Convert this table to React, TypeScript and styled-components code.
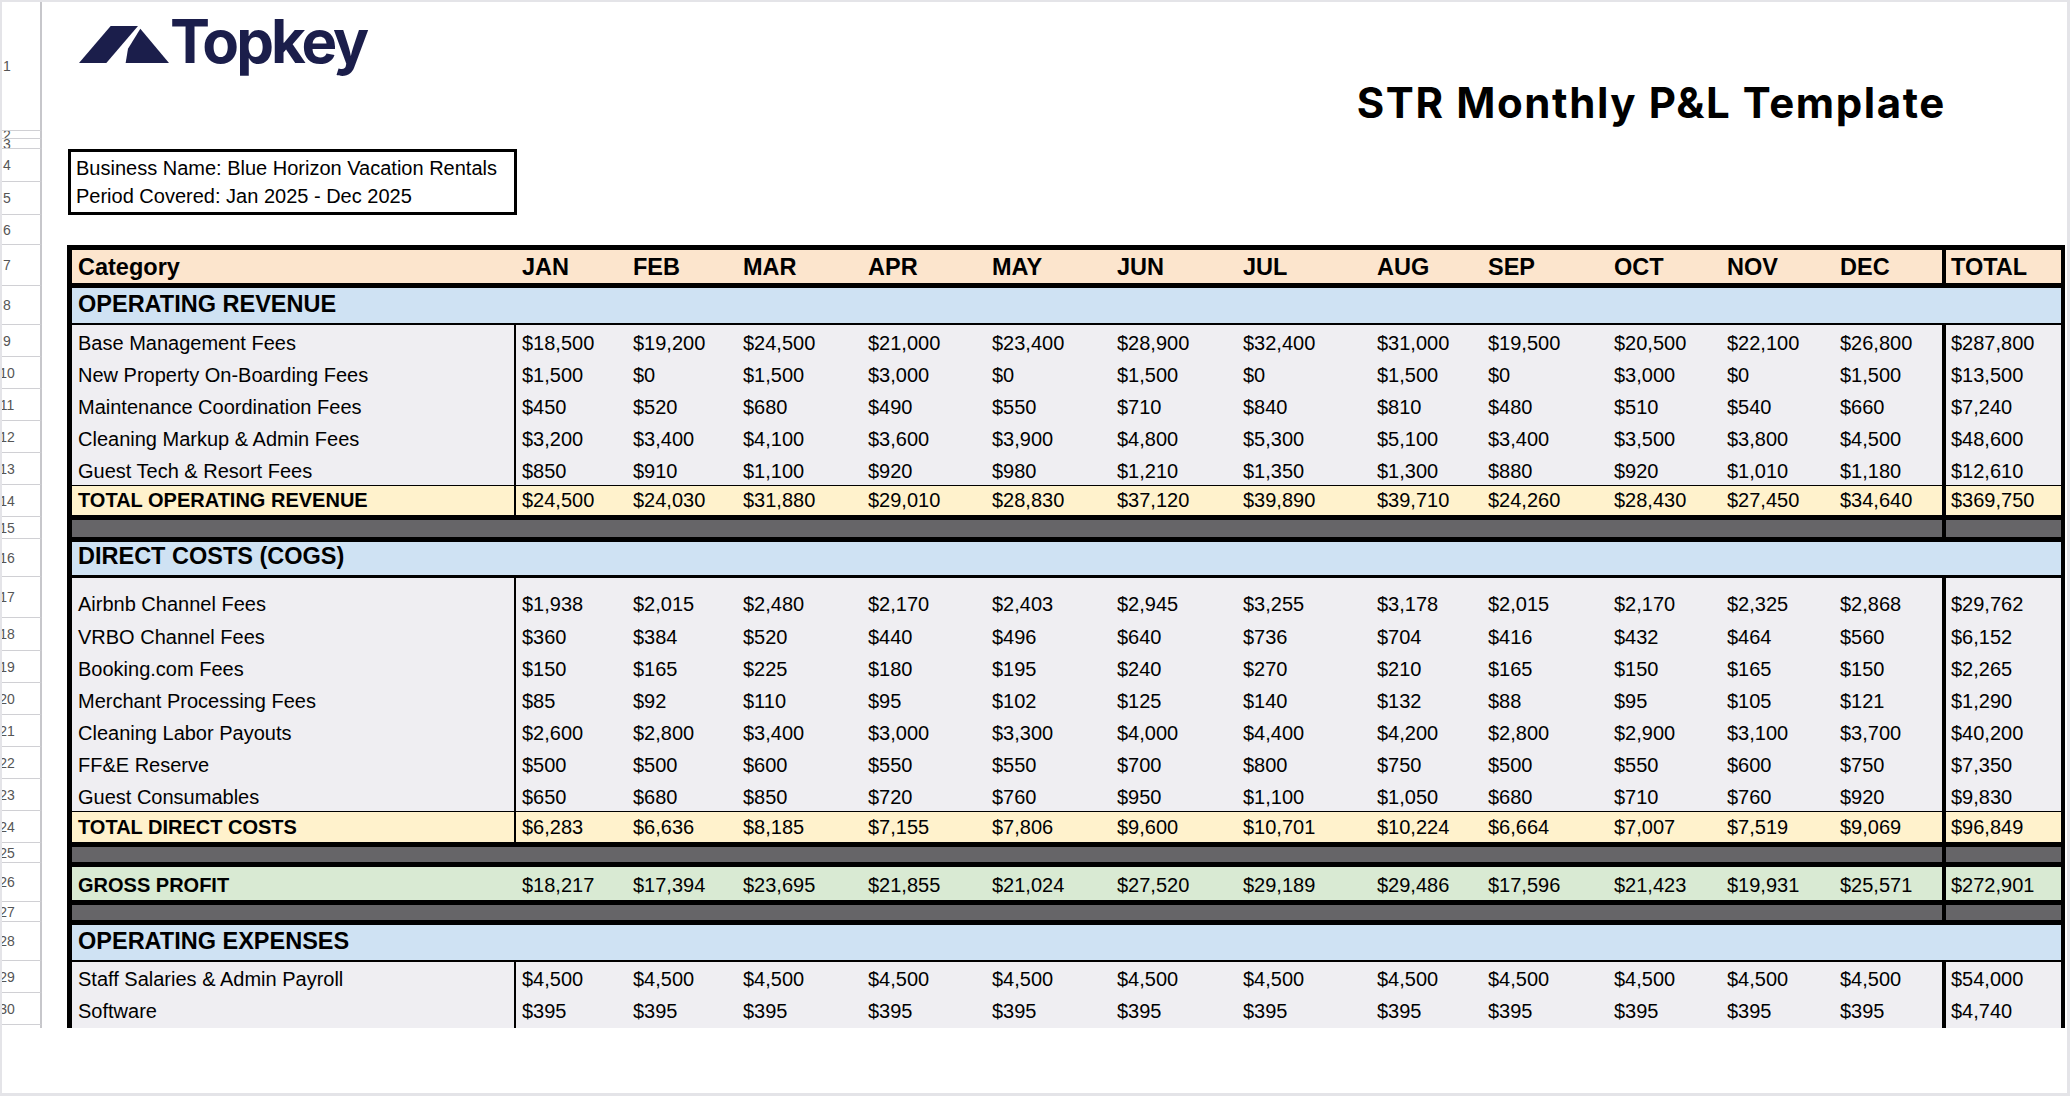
import styled, { createGlobalStyle } from 'styled-components';

type Tone = 'header' | 'section' | 'data' | 'total' | 'spacer' | 'gross';

interface ToneSpec {
  bg: string;
  size: number;
  labelBold: boolean;
  valueBold: boolean;
  pb: number;
  catDiv: boolean;
  totDiv: boolean;
}

const tones: Record<Tone, ToneSpec> = {
  header: { bg: '#fce5cd', size: 23.5, labelBold: true, valueBold: true, pb: 4, catDiv: false, totDiv: true },
  section: { bg: '#cfe2f3', size: 23.5, labelBold: true, valueBold: false, pb: 7, catDiv: false, totDiv: false },
  data: { bg: '#efeef2', size: 20, labelBold: false, valueBold: false, pb: 4, catDiv: true, totDiv: true },
  total: { bg: '#fff2cc', size: 20, labelBold: true, valueBold: false, pb: 5, catDiv: true, totDiv: true },
  spacer: { bg: '#666568', size: 20, labelBold: false, valueBold: false, pb: 0, catDiv: false, totDiv: true },
  gross: { bg: '#d9ead3', size: 20, labelBold: true, valueBold: false, pb: 5, catDiv: false, totDiv: true },
};

const MONTHS = ['JAN', 'FEB', 'MAR', 'APR', 'MAY', 'JUN', 'JUL', 'AUG', 'SEP', 'OCT', 'NOV', 'DEC'];

const GlobalStyle = createGlobalStyle`
  html, body { margin: 0; padding: 0; background: #fff; }
  body { font-family: "Liberation Sans", Arial, sans-serif; color: #000; }
`;

const Frame = styled.div`
  width: 2070px;
  height: 1096px;
  box-sizing: border-box;
  border-style: solid;
  border-color: #e4e4e8;
  border-width: 2px 3px 3px 2px;
  background: #fff;
  overflow: hidden;
`;

const Sheet = styled.div`
  height: 1026px;
  overflow: hidden;
  display: flex;
  flex-direction: column;
`;

const SheetRow = styled.div<{ $h: number }>`
  display: flex;
  flex: none;
  height: ${({ $h }) => $h}px;
`;

const RowNum = styled.div`
  flex: none;
  width: 40px;
  box-sizing: border-box;
  border-right: 2px solid #c7c7cb;
  border-bottom: 1px solid #d0d0d4;
  display: flex;
  align-items: center;
  justify-content: center;
  padding-right: 28px;
  overflow: hidden;
  font-size: 14px;
  color: #555;
`;

const Cells = styled.div`
  flex: 1;
  min-width: 0;
  display: flex;
  padding: 0 2px 0 25px;
`;

const TopCells = styled(Cells)`
  justify-content: space-between;
  align-items: flex-start;
  padding: 0 121px 0 37px;
`;

const Logo = styled.div`
  display: flex;
  align-items: baseline;
  margin-top: 9px;
`;

const LogoMark = styled.svg`
  flex: none;
  width: 90px;
  height: 37px;
  margin-right: 1px;
`;

const LogoText = styled.span`
  font-family: Inter, "Open Sans", sans-serif;
  font-weight: 700;
  font-size: 60px;
  line-height: 1;
  letter-spacing: -3px;
  color: #1b1e4b;
`;

const Title = styled.h1`
  margin: 80px 0 0;
  font-family: Inter, "Open Sans", sans-serif;
  font-weight: 700;
  font-size: 42px;
  line-height: 1;
  letter-spacing: 1.6px;
  color: #000;
  white-space: nowrap;
`;

const InfoCell = styled.div<{ $edge: 'top' | 'bottom' }>`
  width: 449px;
  margin-left: 1px;
  box-sizing: border-box;
  border: 3px solid #000;
  ${({ $edge }) => ($edge === 'top' ? 'border-bottom: 0;' : 'border-top: 0;')}
  display: flex;
  align-items: flex-end;
  padding: 0 0 ${({ $edge }) => ($edge === 'top' ? 4 : 6)}px 5px;
  font-size: 20px;
  line-height: 1;
  white-space: nowrap;
`;

const TableRow = styled.div<{ $tone: Tone; $bt: number; $bb: number }>`
  flex: 1;
  box-sizing: border-box;
  display: grid;
  grid-template-columns: 442px 2px 111px 110px 125px 124px 125px 126px 134px 111px 126px 113px 113px 108px 4px 1fr;
  background: ${({ $tone }) => tones[$tone].bg};
  border: 0 solid #000;
  border-width: ${({ $bt }) => $bt}px 4px ${({ $bb }) => $bb}px 5px;
`;

const Cell = styled.div<{ $tone: Tone; $bold: boolean; $pl?: number }>`
  display: flex;
  align-items: flex-end;
  padding: 0 0 ${({ $tone }) => tones[$tone].pb}px ${({ $pl }) => $pl ?? 6}px;
  font-size: ${({ $tone }) => tones[$tone].size}px;
  font-weight: ${({ $bold }) => ($bold ? 700 : 400)};
  line-height: 1;
  white-space: nowrap;
  min-width: 0;
`;

const Divider = styled.div<{ $on: boolean }>`
  background: ${({ $on }) => ($on ? '#000' : 'transparent')};
`;

interface Line {
  n: number;
  h: number;
  tone: Tone;
  bt: number;
  bb: number;
  label?: string;
  values?: string[];
}

const money = (s: string) => s.split(' ').map(v => `$${v}`);

const dataLine = (n: number, h: number, label: string, nums: string, bt = 0): Line => ({
  n, h, tone: 'data', bt, bb: 0, label, values: money(nums),
});

const lines: Line[] = [
  { n: 7, h: 41, tone: 'header', bt: 5, bb: 3, label: 'Category', values: [...MONTHS, 'TOTAL'] },
  { n: 8, h: 39, tone: 'section', bt: 2, bb: 2, label: 'OPERATING REVENUE' },
  dataLine(9, 32, 'Base Management Fees', '18,500 19,200 24,500 21,000 23,400 28,900 32,400 31,000 19,500 20,500 22,100 26,800 287,800'),
  dataLine(10, 32, 'New Property On-Boarding Fees', '1,500 0 1,500 3,000 0 1,500 0 1,500 0 3,000 0 1,500 13,500'),
  dataLine(11, 32, 'Maintenance Coordination Fees', '450 520 680 490 550 710 840 810 480 510 540 660 7,240'),
  dataLine(12, 32, 'Cleaning Markup & Admin Fees', '3,200 3,400 4,100 3,600 3,900 4,800 5,300 5,100 3,400 3,500 3,800 4,500 48,600'),
  dataLine(13, 32, 'Guest Tech & Resort Fees', '850 910 1,100 920 980 1,210 1,350 1,300 880 920 1,010 1,180 12,610'),
  {
    n: 14, h: 32, tone: 'total', bt: 1, bb: 2, label: 'TOTAL OPERATING REVENUE',
    values: money('24,500 24,030 31,880 29,010 28,830 37,120 39,890 39,710 24,260 28,430 27,450 34,640 369,750'),
  },
  { n: 15, h: 22, tone: 'spacer', bt: 3, bb: 2 },
  { n: 16, h: 38, tone: 'section', bt: 3, bb: 2, label: 'DIRECT COSTS (COGS)' },
  dataLine(17, 41, 'Airbnb Channel Fees', '1,938 2,015 2,480 2,170 2,403 2,945 3,255 3,178 2,015 2,170 2,325 2,868 29,762', 1),
  dataLine(18, 33, 'VRBO Channel Fees', '360 384 520 440 496 640 736 704 416 432 464 560 6,152'),
  dataLine(19, 32, 'Booking.com Fees', '150 165 225 180 195 240 270 210 165 150 165 150 2,265'),
  dataLine(20, 32, 'Merchant Processing Fees', '85 92 110 95 102 125 140 132 88 95 105 121 1,290'),
  dataLine(21, 32, 'Cleaning Labor Payouts', '2,600 2,800 3,400 3,000 3,300 4,000 4,400 4,200 2,800 2,900 3,100 3,700 40,200'),
  dataLine(22, 32, 'FF&E Reserve', '500 500 600 550 550 700 800 750 500 550 600 750 7,350'),
  dataLine(23, 32, 'Guest Consumables', '650 680 850 720 760 950 1,100 1,050 680 710 760 920 9,830'),
  {
    n: 24, h: 32, tone: 'total', bt: 1, bb: 1, label: 'TOTAL DIRECT COSTS',
    values: money('6,283 6,636 8,185 7,155 7,806 9,600 10,701 10,224 6,664 7,007 7,519 9,069 96,849'),
  },
  { n: 25, h: 20, tone: 'spacer', bt: 4, bb: 1 },
  {
    n: 26, h: 39, tone: 'gross', bt: 4, bb: 2, label: 'GROSS PROFIT',
    values: money('18,217 17,394 23,695 21,855 21,024 27,520 29,189 29,486 17,596 21,423 19,931 25,571 272,901'),
  },
  { n: 27, h: 20, tone: 'spacer', bt: 3, bb: 2 },
  { n: 28, h: 39, tone: 'section', bt: 3, bb: 1, label: 'OPERATING EXPENSES' },
  dataLine(29, 32, 'Staff Salaries & Admin Payroll', '4,500 4,500 4,500 4,500 4,500 4,500 4,500 4,500 4,500 4,500 4,500 4,500 54,000', 1),
  dataLine(30, 32, 'Software', '395 395 395 395 395 395 395 395 395 395 395 395 4,740'),
  { n: 31, h: 32, tone: 'data', bt: 0, bb: 0, label: '', values: Array(13).fill('') },
];

function TopkeyMark() {
  return (
    <LogoMark viewBox="55 50 270 110" preserveAspectRatio="none">
      <path d="M55 160 L150 50 L232 50 L137 160 Z" fill="#1b1e4b" />
      <path d="M239 58 L325 160 L195 160 L202 118 Z" fill="#1b1e4b" />
    </LogoMark>
  );
}

function TableLine({ line }: { line: Line }) {
  const spec = tones[line.tone];
  const values = line.values ?? [];
  const months = values.slice(0, 12);
  const total = values[12];
  return (
    <TableRow $tone={line.tone} $bt={line.bt} $bb={line.bb}>
      <Cell $tone={line.tone} $bold={spec.labelBold}>{line.label}</Cell>
      <Divider $on={spec.catDiv} />
      {MONTHS.map((m, i) => (
        <Cell key={m} $tone={line.tone} $bold={spec.valueBold}>{months[i]}</Cell>
      ))}
      <Divider $on={spec.totDiv} />
      <Cell $tone={line.tone} $bold={spec.valueBold} $pl={5}>{total}</Cell>
    </TableRow>
  );
}

export default function App() {
  return (
    <>
      <GlobalStyle />
      <Frame>
        <Sheet>
          <SheetRow $h={129}>
            <RowNum>1</RowNum>
            <TopCells>
              <Logo>
                <TopkeyMark />
                <LogoText>Topkey</LogoText>
              </Logo>
              <Title>STR Monthly P&amp;L Template</Title>
            </TopCells>
          </SheetRow>
          <SheetRow $h={8}>
            <RowNum>2</RowNum>
            <Cells />
          </SheetRow>
          <SheetRow $h={10}>
            <RowNum>3</RowNum>
            <Cells />
          </SheetRow>
          <SheetRow $h={33}>
            <RowNum>4</RowNum>
            <Cells>
              <InfoCell $edge="top">Business Name: Blue Horizon Vacation Rentals</InfoCell>
            </Cells>
          </SheetRow>
          <SheetRow $h={33}>
            <RowNum>5</RowNum>
            <Cells>
              <InfoCell $edge="bottom">Period Covered: Jan 2025 - Dec 2025</InfoCell>
            </Cells>
          </SheetRow>
          <SheetRow $h={30}>
            <RowNum>6</RowNum>
            <Cells />
          </SheetRow>
          {lines.map(line => (
            <SheetRow key={line.n} $h={line.h}>
              <RowNum>{line.n}</RowNum>
              <Cells>
                <TableLine line={line} />
              </Cells>
            </SheetRow>
          ))}
        </Sheet>
      </Frame>
    </>
  );
}
